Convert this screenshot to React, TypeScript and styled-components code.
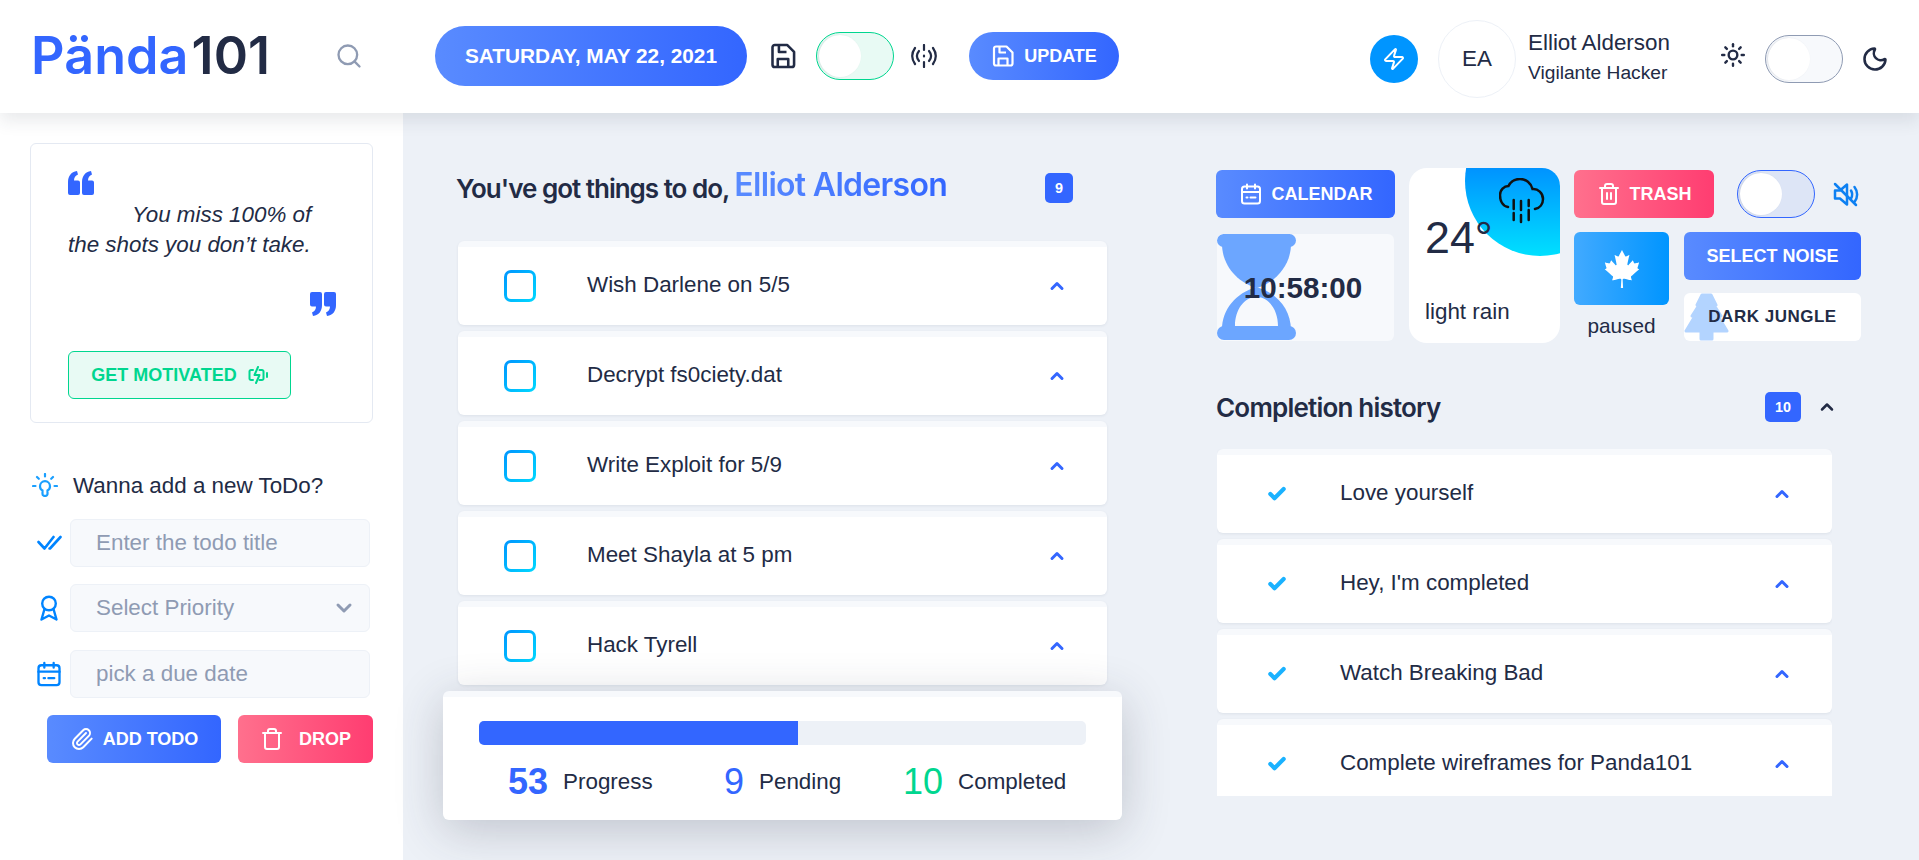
import React from "react";
import styled, { createGlobalStyle } from "styled-components";
import {
  Check,
  ChevronDown,
  ChevronUp,
  Moon,
  Paperclip,
  Search,
  Sun,
  Trash,
  Trash2,
  Zap,
} from "lucide-react";
import { FaCanadianMapleLeaf } from "react-icons/fa";

const GlobalStyle = createGlobalStyle`
  html, body {
    margin: 0;
    height: 100%;
    overflow: hidden;
    background: #edf1f7;
    font-family: "Liberation Sans", Arial, sans-serif;
    color: #222b45;
  }
  * { box-sizing: border-box; }
`;

const BLUE = "linear-gradient(90deg, #598bff, #3366ff)";
const RED = "linear-gradient(90deg, #ff708d, #ff3d71)";

const Page = styled.div`
  width: 1919px;
  height: 860px;
  display: flex;
  flex-direction: column;
`;

const Header = styled.header`
  position: relative;
  z-index: 2;
  height: 113px;
  flex: none;
  display: flex;
  align-items: center;
  padding: 0 30px 1px 31px;
  background: #fff;
  box-shadow: 0 8px 16px rgba(44, 51, 73, 0.1);
`;

const Logo = styled.div`
  width: 239px;
  flex: none;
  font-family: Inter, sans-serif;
  font-size: 52px;
  font-weight: 600;
  letter-spacing: 0.1px;
  line-height: 60px;
  color: #3366ff;
  span {
    margin-left: 3px;
    color: #222b45;
  }
`;

const SearchSlot = styled.div`
  margin-left: 65px;
  display: flex;
  color: #8f9bb3;
`;

const DatePill = styled.div`
  margin-left: 72px;
  width: 312px;
  height: 60px;
  flex: none;
  border-radius: 30px;
  background: ${BLUE};
  color: #fff;
  font-size: 20.8px;
  font-weight: 700;
  display: flex;
  align-items: center;
  justify-content: center;
`;

const HeaderIcon = styled.div<{ $ml: number; $mt?: number }>`
  margin-left: ${(p) => p.$ml}px;
  margin-top: ${(p) => p.$mt ?? 0}px;
  display: flex;
  color: #222b45;
`;

const Track = styled.div<{ $tone: "green" | "grey" | "blue"; $ml: number }>`
  position: relative;
  flex: none;
  margin-left: ${(p) => p.$ml}px;
  width: 78px;
  height: 48px;
  border-radius: 24px;
  border: 1px solid
    ${(p) => (p.$tone === "green" ? "#00d68f" : p.$tone === "grey" ? "#8f9bb3" : "#3366ff")};
  background: ${(p) => (p.$tone === "green" ? "#e8faf4" : p.$tone === "grey" ? "#f7f9fc" : "#dde5f6")};
`;

const Knob = styled.div`
  position: absolute;
  left: 2px;
  top: 2px;
  width: 42px;
  height: 42px;
  border-radius: 50%;
  background: #fff;
  box-shadow: -1px 0 2px rgba(44, 51, 73, 0.12);
`;

const Button = styled.button<{ $bg: string; $w: number; $gap?: number }>`
  flex: none;
  width: ${(p) => p.$w}px;
  height: 48px;
  border: 0;
  border-radius: 6px;
  padding: 0;
  background: ${(p) => p.$bg};
  color: #fff;
  font-family: "Liberation Sans", Arial, sans-serif;
  font-size: 18px;
  font-weight: 700;
  display: flex;
  align-items: center;
  justify-content: center;
  gap: ${(p) => p.$gap ?? 9}px;
`;

const UpdateButton = styled(Button)`
  margin-left: 32px;
  border-radius: 24px;
`;

const UserGroup = styled.div`
  margin-left: auto;
  padding-top: 6px;
  display: flex;
  align-items: center;
`;

const Bolt = styled.div`
  width: 48px;
  height: 48px;
  border-radius: 50%;
  background: #0095ff;
  color: #fff;
  display: flex;
  align-items: center;
  justify-content: center;
`;

const Avatar = styled.div`
  margin-left: 20px;
  width: 78px;
  height: 78px;
  border-radius: 50%;
  border: 1px solid #edf1f7;
  font-size: 22.4px;
  display: flex;
  align-items: center;
  justify-content: center;
`;

const UserInfo = styled.div`
  margin: -5px 0 0 12px;
  width: 169px;
`;

const UserName = styled.div`
  font-size: 22.4px;
  line-height: 30px;
`;

const UserRole = styled.div`
  font-size: 19.2px;
  line-height: 26px;
  margin-top: 2px;
`;

const Body = styled.div`
  flex: 1;
  display: flex;
  min-height: 0;
`;

const Sidebar = styled.aside`
  width: 403px;
  flex: none;
  background: #fff;
  padding: 30px 30px 0;
`;

const QuoteCard = styled.section`
  width: 343px;
  height: 280px;
  border: 1px solid #e4e9f2;
  border-radius: 6px;
  padding: 27px 36px 0 37px;
  display: flex;
  flex-direction: column;
`;

const QuoteText = styled.p`
  margin: 5px 0 0;
  font-size: 22.4px;
  font-style: italic;
  line-height: 30px;
  text-indent: 64px;
  width: 255px;
  color: #222b45;
`;

const CloseQuote = styled.div`
  align-self: flex-end;
  margin-top: 32px;
  display: flex;
`;

const MotivateButton = styled.button`
  margin-top: 35px;
  width: 223px;
  height: 48px;
  flex: none;
  border: 1px solid #00d68f;
  border-radius: 6px;
  background: #e8faf4;
  color: #00d68f;
  font-family: "Liberation Sans", Arial, sans-serif;
  font-size: 18px;
  font-weight: 700;
  display: flex;
  align-items: center;
  justify-content: center;
  gap: 11px;
`;

const FormHeading = styled.div`
  margin-top: 49px;
  height: 28px;
  display: flex;
  align-items: center;
  gap: 15px;
  padding-left: 2px;
  font-size: 22.4px;
`;

const FormRows = styled.div`
  margin-top: 19px;
  display: flex;
  flex-direction: column;
  gap: 17px;
`;

const FormRow = styled.div`
  display: flex;
  align-items: center;
  &:last-child { margin-top: 1px; }
`;

const FormIcon = styled.div`
  width: 40px;
  flex: none;
  display: flex;
  justify-content: center;
  padding-right: 2px;
  color: #0084ff;
`;

const Input = styled.input`
  width: 300px;
  height: 48px;
  border: 1px solid #edf1f7;
  border-radius: 6px;
  background: #f7f9fc;
  padding: 0 25px;
  font-family: "Liberation Sans", Arial, sans-serif;
  font-size: 22.4px;
  color: #222b45;
  &::placeholder { color: #8f9bb3; opacity: 1; }
`;

const SelectBox = styled.div`
  width: 300px;
  height: 48px;
  border: 1px solid #edf1f7;
  border-radius: 6px;
  background: #f7f9fc;
  padding: 0 13px 0 25px;
  font-size: 22.4px;
  color: #8f9bb3;
  display: flex;
  align-items: center;
  justify-content: space-between;
`;

const FormActions = styled.div`
  margin-top: 17px;
  padding-left: 17px;
  display: flex;
  gap: 17px;
`;

const Center = styled.main`
  width: 649px;
  flex: none;
  margin-left: 55px;
  padding-top: 45px;
`;

const TitleRow = styled.div`
  height: 60px;
  display: flex;
  align-items: center;
  padding-right: 34px;
`;

const Title = styled.h1<{ $ls?: number; $ml?: number; $mt?: number }>`
  margin: ${(p) => p.$mt ?? 0}px 0 0 ${(p) => p.$ml ?? 0}px;
  font-family: Inter, sans-serif;
  font-size: 26px;
  font-weight: 600;
  letter-spacing: ${(p) => p.$ls ?? -0.8}px;
`;

const TitleName = styled.span`
  font-size: 32px;
  font-weight: 600;
  letter-spacing: -0.7px;
  vertical-align: 2px;
  background: ${BLUE};
  -webkit-background-clip: text;
  background-clip: text;
  color: transparent;
`;

const Badge = styled.div`
  margin-left: auto;
  height: 30px;
  padding: 0 10px;
  border-radius: 5px;
  background: #3366ff;
  color: #fff;
  font-size: 14.4px;
  font-weight: 700;
  display: flex;
  align-items: center;
`;

const TodoList = styled.div`
  margin-top: 23px;
  display: flex;
  flex-direction: column;
  gap: 6px;
`;

const TaskCard = styled.div<{ $history?: boolean }>`
  flex: none;
  height: 84px;
  border-top: 6px solid #f7f9fc;
  border-radius: 6px;
  background: #fff;
  box-shadow: 0 1px 3px rgba(44, 51, 73, 0.08);
  display: flex;
  align-items: center;
  padding: 0 40px 0 ${(p) => (p.$history ? 50 : 46)}px;
  font-size: 22.4px;
`;

const CheckBox = styled.div`
  width: 32px;
  height: 32px;
  flex: none;
  border: 3px solid transparent;
  border-radius: 7px;
  background: linear-gradient(#fff, #fff) padding-box,
    linear-gradient(135deg, #0095ff, #00d9ff) border-box;
`;

const TaskText = styled.span<{ $history?: boolean }>`
  margin-left: ${(p) => (p.$history ? 53 : 51)}px;
  margin-top: -2px;
`;

const TaskChevron = styled.div`
  margin-left: auto;
  display: flex;
  color: #3366ff;
`;

const ProgressPanel = styled.section`
  position: relative;
  margin: 6px -15px 0;
  height: 129px;
  border-top: 6px solid #f7f9fc;
  border-radius: 6px;
  background: #fff;
  padding: 24px 36px 0;
  box-shadow: 0 10px 48px rgba(44, 51, 73, 0.24);
`;

const ProgressTrack = styled.div`
  height: 24px;
  border-radius: 5px;
  background: #edf1f7;
  overflow: hidden;
`;

const ProgressFill = styled.div`
  height: 100%;
  background: #3366ff;
`;

const Stats = styled.div`
  margin-top: 14px;
  height: 46px;
  padding-left: 29px;
  display: grid;
  grid-template-columns: 216px 179px auto;
  align-items: center;
`;

const Stat = styled.div`
  display: flex;
  align-items: center;
  gap: 15px;
  font-size: 22.4px;
`;

const StatValue = styled.span<{ $color: string; $bold?: boolean }>`
  font-size: 36px;
  font-weight: ${(p) => (p.$bold ? 700 : 400)};
  color: ${(p) => p.$color};
`;

const RightColumn = styled.section`
  margin-left: 109px;
  width: 646px;
  flex: none;
  padding-top: 55px;
`;

const Tools = styled.div`
  display: flex;
  align-items: flex-start;
  gap: 14px;
`;

const ToolColumn = styled.div<{ $w: number }>`
  width: ${(p) => p.$w}px;
  margin-top: 2px;
  display: flex;
  flex-direction: column;
`;

const TimerCard = styled.div`
  position: relative;
  margin: 16px 1px 0;
  height: 107px;
  border-radius: 6px;
  background: #f7f9fc;
  display: flex;
  align-items: center;
  justify-content: center;
  padding-right: 5px;
  font-size: 29.6px;
  font-weight: 700;
  overflow: hidden;
`;

const Hourglass = styled.svg`
  position: absolute;
  left: 0;
  top: 0;
`;

const TimerText = styled.span`
  position: relative;
`;

const WeatherCard = styled.div`
  position: relative;
  flex: none;
  width: 151px;
  height: 175px;
  border-radius: 18px;
  background: #fff;
  overflow: hidden;
  padding: 39px 0 0 16px;
`;

const SunDisc = styled.div`
  position: absolute;
  left: 56px;
  top: -62px;
  width: 150px;
  height: 150px;
  border-radius: 50%;
  background: linear-gradient(180deg, #0084ff 30%, #00e0ff);
`;

const RainIcon = styled.svg`
  position: absolute;
  left: 90px;
  top: 10px;
`;

const Temperature = styled.div`
  position: relative;
  font-size: 44.8px;
  line-height: 60px;
`;

const WeatherLabel = styled.div`
  margin-top: 30px;
  font-size: 22.4px;
  line-height: 30px;
`;

const TopRow = styled.div`
  display: flex;
  align-items: center;
`;

const MuteSlot = styled.div`
  margin-left: 18px;
  display: flex;
  color: #0d80f2;
`;

const NoiseRow = styled.div`
  margin-top: 14px;
  display: flex;
  gap: 15px;
`;

const LeafColumn = styled.div`
  width: 95px;
  display: flex;
  flex-direction: column;
  align-items: center;
`;

const LeafTile = styled.div`
  width: 95px;
  height: 73px;
  border-radius: 6px;
  background: linear-gradient(90deg, #42aaff, #0095ff);
  color: #fff;
  display: flex;
  align-items: center;
  justify-content: center;
`;

const LeafLabel = styled.div`
  margin-top: 9px;
  font-size: 20.8px;
  line-height: 24px;
`;

const NoiseColumn = styled.div`
  width: 177px;
  display: flex;
  flex-direction: column;
  gap: 13px;
`;

const JungleTile = styled.div`
  position: relative;
  height: 48px;
  border-radius: 6px;
  background: #fff;
  overflow: hidden;
  display: flex;
  align-items: center;
  justify-content: center;
  font-size: 17px;
  font-weight: 700;
  letter-spacing: 0.5px;
`;

const TreeMark = styled.svg`
  position: absolute;
  left: 0;
  top: 0;
`;

const JungleText = styled.span`
  position: relative;
`;

const HistoryRow = styled.div`
  margin-top: 34px;
  height: 60px;
  display: flex;
  align-items: center;
  padding-right: 25px;
`;

const HistoryChevron = styled.div`
  margin-left: 16px;
  display: flex;
`;

const HistoryList = styled.div`
  margin: 12px 0 0 1px;
  width: 615px;
  height: 347px;
  overflow: hidden;
  display: flex;
  flex-direction: column;
  gap: 6px;
`;

const CheckSlot = styled.div`
  display: flex;
  color: #1ab2ff;
`;

function CalendarIcon({ size }: { size: number }) {
  return (
    <svg width={size} height={size} viewBox="0 0 24 24" fill="none" stroke="currentColor" strokeWidth="2" strokeLinecap="round">
      <rect x="3" y="4.500" width="18" height="17" rx="2.500" />
      <path d="M3 10h18M8 2.500v4M16 2.500v4M7.500 15.500h1M11.500 15.500h5" />
    </svg>
  );
}

function FloppyIcon({ size }: { size: number }) {
  return (
    <svg width={size} height={size} viewBox="0 0 24 24" fill="none" stroke="currentColor" strokeWidth="2.200" strokeLinejoin="round">
      <path d="M5 2.500h10.500l6 6V19.500a2 2 0 0 1-2 2H5a2 2 0 0 1-2-2v-15a2 2 0 0 1 2-2z" />
      <path d="M8.500 2.500v6h6.500M7.500 21.500v-7h9v7" />
    </svg>
  );
}

function SignalIcon() {
  return (
    <svg width="26" height="24" viewBox="0 0 26 24" fill="none" stroke="currentColor" strokeWidth="2.200" strokeLinecap="round">
      <path d="M13 1v5M13 18v5M13 11.500v1" />
      <path d="M8 7c-2.500 3-2.500 7 0 10M18 7c2.500 3 2.500 7 0 10" />
      <path d="M4 4C.5 9 .5 15 4 20M22 4c3.500 5 3.500 11 0 16" />
    </svg>
  );
}

function BulbIcon() {
  return (
    <svg width="26" height="26" viewBox="0 0 26 26" fill="none" stroke="#1a9fff" strokeWidth="2.200" strokeLinecap="round">
      <path d="M10.500 21v-3.500c-1.500-.8-2.500-2.500-2.500-4.300a5 5 0 0 1 10 0c0 1.800-1 3.500-2.500 4.300V21a1.800 1.800 0 0 1-1.800 1.800h-1.900A1.800 1.800 0 0 1 10.500 21z" />
      <path d="M13 1v2.500M5 4l1.800 1.800M21 4l-1.800 1.800M1 13h2.500M22.500 13H25" />
    </svg>
  );
}

function QuoteMark({ flip }: { flip?: boolean }) {
  return (
    <svg width="26" height="24" viewBox="0 0 26 24" fill="#3366ff" style={flip ? { transform: "rotate(180deg)" } : undefined}>
      <path d="M0 11C0 5 3 1 9 0l1 3.500C7.500 4.500 6 6.500 6 9.500h4a2 2 0 0 1 2 2V22a2 2 0 0 1-2 2H2a2 2 0 0 1-2-2z" />
      <path d="M14 11c0-6 3-10 9-11l1 3.500c-2.500 1-4 3-4 6h4a2 2 0 0 1 2 2V22a2 2 0 0 1-2 2h-8a2 2 0 0 1-2-2z" />
    </svg>
  );
}

function BatteryBolt() {
  return (
    <svg width="20" height="18" viewBox="0 0 20 18" fill="none" stroke="currentColor" strokeWidth="2" strokeLinecap="round" strokeLinejoin="round">
      <path d="M5 4H3a1.500 1.500 0 0 0-1.500 1.500v7A1.500 1.500 0 0 0 3 14h2M11.500 4H14a1.500 1.500 0 0 1 1.500 1.500v7A1.500 1.500 0 0 1 14 14h-2.500" />
      <path d="M10 1L6.500 9h5L8 17M19 7v4" />
    </svg>
  );
}

function DoubleCheck() {
  return (
    <svg width="25" height="16" viewBox="0 0 25 16" fill="none" stroke="currentColor" strokeWidth="2.600" strokeLinecap="round" strokeLinejoin="round">
      <path d="M1.500 7l6 6.500L16.500 2M12.500 13.500h.5L23.500 2" />
    </svg>
  );
}

function RibbonIcon() {
  return (
    <svg width="18" height="26" viewBox="0 0 18 26" fill="none" stroke="currentColor" strokeWidth="2.400" strokeLinejoin="round">
      <circle cx="9" cy="8.500" r="6.800" />
      <path d="M4.500 14L1.500 24.500 9 20.500l7.500 4L13.500 14" />
    </svg>
  );
}

function MuteIcon() {
  return (
    <svg width="27" height="25" viewBox="0 0 27 25" fill="none" stroke="currentColor" strokeWidth="2.500" strokeLinecap="round" strokeLinejoin="round">
      <path d="M2 8.500h5l7-6v20l-7-6H2z" />
      <path d="M18 8.500c1.500 2.500 1.500 5.500 0 8M21.500 5c3.500 4.500 3.500 10.500 0 15M2 2l21 21" />
    </svg>
  );
}

const todos = ["Wish Darlene on 5/5", "Decrypt fs0ciety.dat", "Write Exploit for 5/9", "Meet Shayla at 5 pm", "Hack Tyrell"];
const history = ["Love yourself", "Hey, I'm completed", "Watch Breaking Bad", "Complete wireframes for Panda101"];

export default function App() {
  const pending = 9;
  const completed = 10;
  const progress = (completed / (pending + completed)) * 100;

  return (
    <Page>
      <GlobalStyle />
      <Header>
        <Logo>
          Pända<span>101</span>
        </Logo>
        <SearchSlot>
          <Search size={28} strokeWidth={2} />
        </SearchSlot>
        <DatePill>SATURDAY, MAY 22, 2021</DatePill>
        <HeaderIcon $ml={22}>
          <FloppyIcon size={28} />
        </HeaderIcon>
        <Track $tone="green" $ml={19}>
          <Knob />
        </Track>
        <HeaderIcon $ml={17}>
          <SignalIcon />
        </HeaderIcon>
        <UpdateButton $bg={BLUE} $w={150}>
          <FloppyIcon size={24} />
          UPDATE
        </UpdateButton>
        <UserGroup>
          <Bolt>
            <Zap size={24} strokeWidth={2} />
          </Bolt>
          <Avatar>EA</Avatar>
          <UserInfo>
            <UserName>Elliot Alderson</UserName>
            <UserRole>Vigilante Hacker</UserRole>
          </UserInfo>
          <HeaderIcon $ml={23} $mt={-8}>
            <Sun size={26} strokeWidth={2.2} />
          </HeaderIcon>
          <Track $tone="grey" $ml={19}>
            <Knob />
          </Track>
          <HeaderIcon $ml={18}>
            <Moon size={28} strokeWidth={2.2} />
          </HeaderIcon>
        </UserGroup>
      </Header>

      <Body>
        <Sidebar>
          <QuoteCard>
            <QuoteMark />
            <QuoteText>You miss 100% of the shots you don’t take.</QuoteText>
            <CloseQuote>
              <QuoteMark flip />
            </CloseQuote>
            <MotivateButton>
              GET MOTIVATED
              <BatteryBolt />
            </MotivateButton>
          </QuoteCard>

          <FormHeading>
            <BulbIcon />
            Wanna add a new ToDo?
          </FormHeading>
          <FormRows>
            <FormRow>
              <FormIcon>
                <DoubleCheck />
              </FormIcon>
              <Input placeholder="Enter the todo title" />
            </FormRow>
            <FormRow>
              <FormIcon>
                <RibbonIcon />
              </FormIcon>
              <SelectBox>
                Select Priority
                <ChevronDown size={24} strokeWidth={3} />
              </SelectBox>
            </FormRow>
            <FormRow>
              <FormIcon>
                <CalendarIcon size={28} />
              </FormIcon>
              <Input placeholder="pick a due date" />
            </FormRow>
          </FormRows>
          <FormActions>
            <Button $bg={BLUE} $w={174} $gap={9}>
              <Paperclip size={24} strokeWidth={2} />
              ADD TODO
            </Button>
            <Button $bg={RED} $w={135} $gap={15}>
              <Trash size={24} strokeWidth={2} />
              DROP
            </Button>
          </FormActions>
        </Sidebar>

        <Center>
          <TitleRow>
            <Title $ls={-1} $ml={-2} $mt={-7}>
              You've got things to do, <TitleName>Elliot Alderson</TitleName>
            </Title>
            <Badge>9</Badge>
          </TitleRow>
          <TodoList>
            {todos.map((todo) => (
              <TaskCard key={todo}>
                <CheckBox />
                <TaskText>{todo}</TaskText>
                <TaskChevron>
                  <ChevronUp size={20} strokeWidth={3.6} />
                </TaskChevron>
              </TaskCard>
            ))}
          </TodoList>
          <ProgressPanel>
            <ProgressTrack>
              <ProgressFill style={{ width: `${progress}%` }} />
            </ProgressTrack>
            <Stats>
              <Stat>
                <StatValue $color="#3366ff" $bold>
                  {Math.round(progress)}
                </StatValue>
                Progress
              </Stat>
              <Stat>
                <StatValue $color="#3366ff">{pending}</StatValue>
                Pending
              </Stat>
              <Stat>
                <StatValue $color="#00d68f">{completed}</StatValue>
                Completed
              </Stat>
            </Stats>
          </ProgressPanel>
        </Center>

        <RightColumn>
          <Tools>
            <ToolColumn $w={179}>
              <Button $bg={BLUE} $w={179}>
                <CalendarIcon size={24} />
                CALENDAR
              </Button>
              <TimerCard>
                <Hourglass width="79" height="107" viewBox="0 0 79 107" fill="#6ca6ff">
                  <rect x="0" y="0" width="79" height="13" rx="6.500" />
                  <path d="M5 10h69c0 20-14 38-34.500 44C19 48 5 30 5 10z" />
                  <path
                    fillRule="evenodd"
                    d="M39.500 53C60 59 74 75 74 96H5c0-21 14-37 34.500-43zM18 92h43c0-16-9-29-21.500-29S18 76 18 92z"
                  />
                  <rect x="0" y="92" width="79" height="14" rx="7" />
                </Hourglass>
                <TimerText>10:58:00</TimerText>
              </TimerCard>
            </ToolColumn>

            <WeatherCard>
              <SunDisc />
              <RainIcon width="46" height="46" viewBox="0 0 46 46" fill="none" stroke="#111" strokeWidth="2.500" strokeLinecap="round">
                <path d="M9 29C3 28 1 22 1 17 1 12 5 8 9.500 8 12 3 16 1 21 1 27 1 32 5 33.500 11 39 10.500 44 15 44 21 44 26 41 30 36 31" />
                <path d="M14.700 22v9M14.700 35v7M22 23v9M22 37v7M29.700 22v6M29.700 32v10" />
              </RainIcon>
              <Temperature>24°</Temperature>
              <WeatherLabel>light rain</WeatherLabel>
            </WeatherCard>

            <ToolColumn $w={287}>
              <TopRow>
                <Button $bg={RED} $w={140}>
                  <Trash2 size={24} strokeWidth={2} />
                  TRASH
                </Button>
                <Track $tone="blue" $ml={23}>
                  <Knob />
                </Track>
                <MuteSlot>
                  <MuteIcon />
                </MuteSlot>
              </TopRow>
              <NoiseRow>
                <LeafColumn>
                  <LeafTile>
                    <FaCanadianMapleLeaf size={38} />
                  </LeafTile>
                  <LeafLabel>paused</LeafLabel>
                </LeafColumn>
                <NoiseColumn>
                  <Button $bg={BLUE} $w={177}>
                    SELECT NOISE
                  </Button>
                  <JungleTile>
                    <TreeMark width="45" height="48" viewBox="0 0 45 48" fill="#b3d4ff" stroke="#b3d4ff" strokeWidth="3" strokeLinejoin="round">
                      <path d="M18 2h9l5 10h-2l7 11h-3l9 15H28v8H17v-8H2l9-15H8l7-11h-2z" />
                    </TreeMark>
                    <JungleText>DARK JUNGLE</JungleText>
                  </JungleTile>
                </NoiseColumn>
              </NoiseRow>
            </ToolColumn>
          </Tools>

          <HistoryRow>
            <Title>Completion history</Title>
            <Badge>10</Badge>
            <HistoryChevron>
              <ChevronUp size={20} strokeWidth={3} />
            </HistoryChevron>
          </HistoryRow>
          <HistoryList>
            {history.map((item) => (
              <TaskCard key={item} $history>
                <CheckSlot>
                  <Check size={20} strokeWidth={5} />
                </CheckSlot>
                <TaskText $history>{item}</TaskText>
                <TaskChevron>
                  <ChevronUp size={20} strokeWidth={3.6} />
                </TaskChevron>
              </TaskCard>
            ))}
          </HistoryList>
        </RightColumn>
      </Body>
    </Page>
  );
}
